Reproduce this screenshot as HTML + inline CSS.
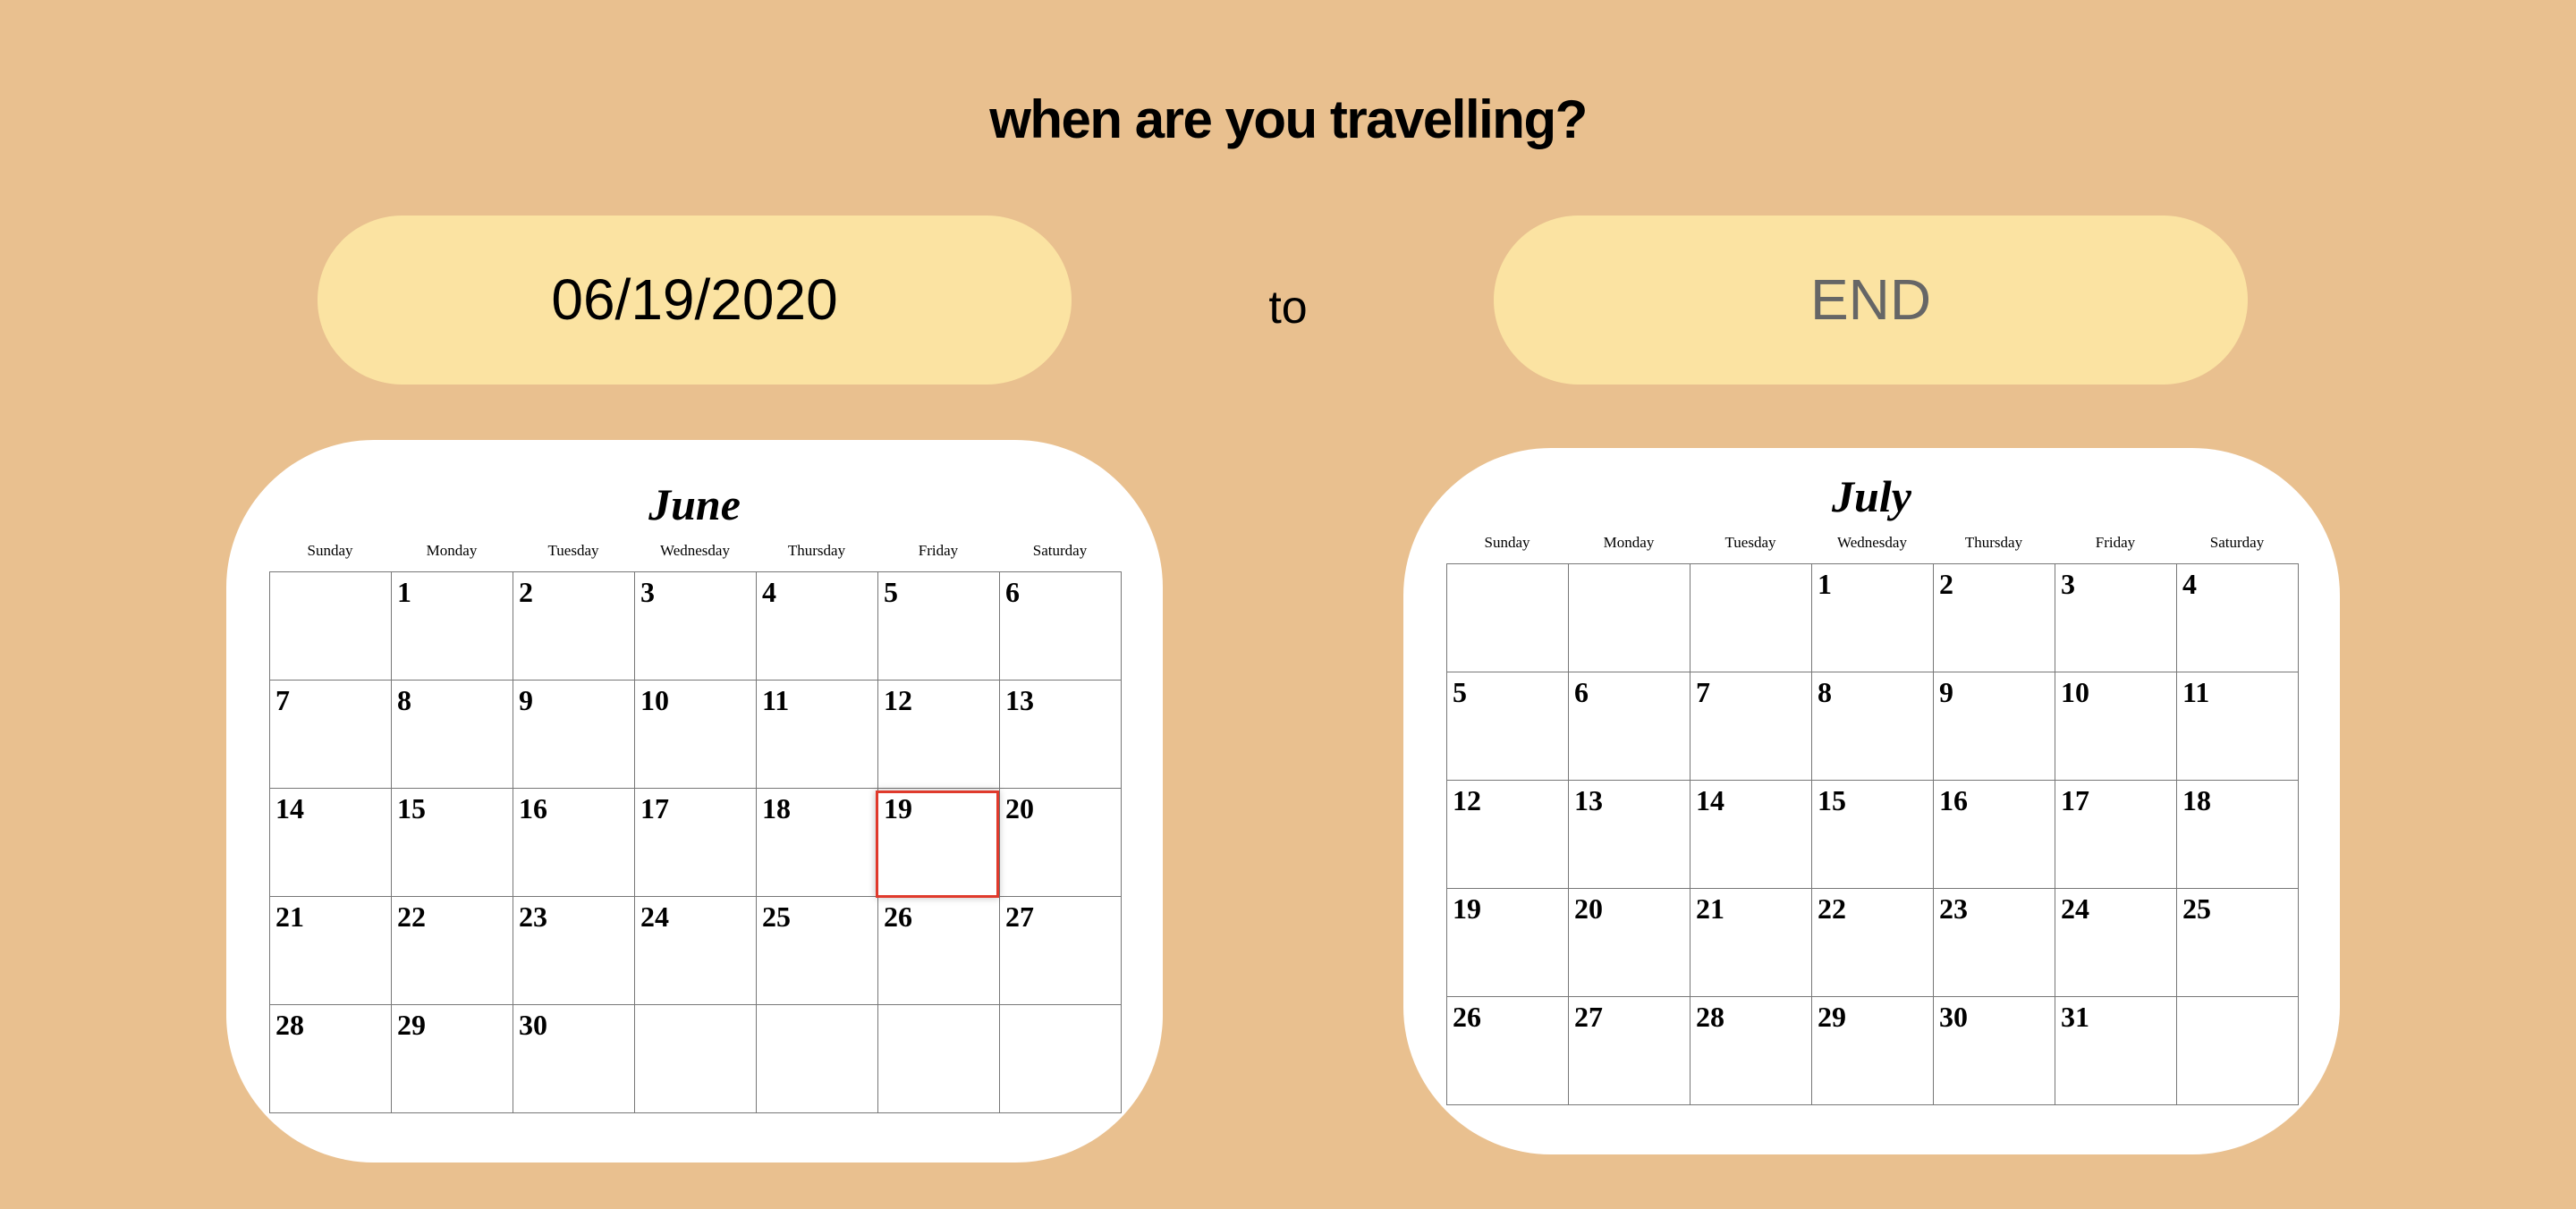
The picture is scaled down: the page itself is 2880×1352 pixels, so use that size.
<!DOCTYPE html>
<html><head><meta charset="utf-8"><style>
*{margin:0;padding:0;box-sizing:border-box}
body{width:2880px;height:1352px;background:#E9C08F;position:relative;overflow:hidden;font-family:"Liberation Sans",sans-serif}
.title{position:absolute;left:0;width:2880px;top:99px;text-align:center;font-weight:bold;font-size:60px;letter-spacing:-1.5px;color:#000}
.pill{position:absolute;top:241px;width:843px;height:189px;border-radius:95px;background:#FBE3A2;text-align:center;line-height:189px;font-size:64px}
.to{position:absolute;left:1380px;width:120px;top:314px;text-align:center;font-size:52px}
.card{position:absolute;background:#fff;border-radius:165px}
.month{position:absolute;left:0;width:100%;text-align:center;font-family:"Liberation Serif",serif;font-weight:bold;font-style:italic;font-size:50px}
.days{position:absolute;display:flex;font-family:"Liberation Serif",serif;font-size:17px;font-weight:normal}
.days span{width:136px;text-align:center}
table{position:absolute;border-collapse:collapse;font-family:"Liberation Serif",serif;font-weight:bold;font-size:32px}
td{width:136px;height:121px;border:1.5px solid #777;vertical-align:top;padding:4px 6px;line-height:36px}
.sel{position:absolute;left:979px;top:884px;width:138px;height:120px;border:3px solid #E03A2C;box-shadow:0 0 8px rgba(0,0,0,.25)}
</style></head><body>
<div class="title">when are you travelling?</div>
<div class="pill" style="left:355px">06/19/2020</div>
<div class="to">to</div>
<div class="pill" style="left:1670px;color:#666">END</div>

<div class="card" style="left:253px;top:492px;width:1047px;height:808px">
<div class="month" style="top:43px">June</div>
<div class="days" style="left:48px;top:114px"><span>Sunday</span><span>Monday</span><span>Tuesday</span><span>Wednesday</span><span>Thursday</span><span>Friday</span><span>Saturday</span></div>
<table style="left:48px;top:147px">
<tr><td></td><td>1</td><td>2</td><td>3</td><td>4</td><td>5</td><td>6</td></tr>
<tr><td>7</td><td>8</td><td>9</td><td>10</td><td>11</td><td>12</td><td>13</td></tr>
<tr><td>14</td><td>15</td><td>16</td><td>17</td><td>18</td><td>19</td><td>20</td></tr>
<tr><td>21</td><td>22</td><td>23</td><td>24</td><td>25</td><td>26</td><td>27</td></tr>
<tr><td>28</td><td>29</td><td>30</td><td></td><td></td><td></td><td></td></tr>
</table>
</div>
<div class="sel"></div>

<div class="card" style="left:1569px;top:501px;width:1047px;height:790px">
<div class="month" style="top:25px">July</div>
<div class="days" style="left:48px;top:96px"><span>Sunday</span><span>Monday</span><span>Tuesday</span><span>Wednesday</span><span>Thursday</span><span>Friday</span><span>Saturday</span></div>
<table style="left:48px;top:129px">
<tr><td></td><td></td><td></td><td>1</td><td>2</td><td>3</td><td>4</td></tr>
<tr><td>5</td><td>6</td><td>7</td><td>8</td><td>9</td><td>10</td><td>11</td></tr>
<tr><td>12</td><td>13</td><td>14</td><td>15</td><td>16</td><td>17</td><td>18</td></tr>
<tr><td>19</td><td>20</td><td>21</td><td>22</td><td>23</td><td>24</td><td>25</td></tr>
<tr><td>26</td><td>27</td><td>28</td><td>29</td><td>30</td><td>31</td><td></td></tr>
</table>
</div>
</body></html>
